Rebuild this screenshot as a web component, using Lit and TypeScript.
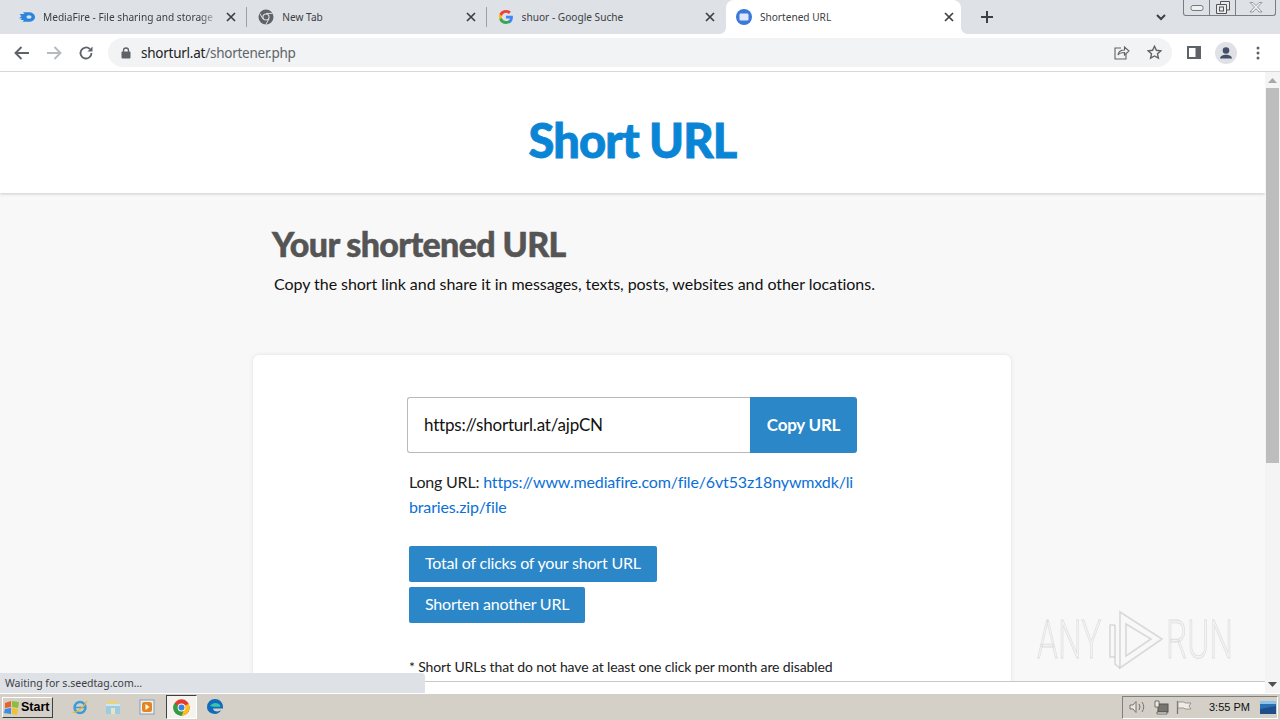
import { LitElement, html, css, svg } from "lit";
import { customElement } from "lit/decorators.js";

const closeIcon = html`<svg class="close" viewBox="0 0 10 10" width="10" height="10"><path d="M1 1l8 8M9 1l-8 8" stroke="#3c4043" stroke-width="1.7" fill="none"/></svg>`;

const mediafire = html`<svg viewBox="0 0 16 16" width="16" height="16"><path d="M0.500 5h5L4 3.200h5.500C13.400 3.200 16 5.300 16 8s-2.600 4.800-6.500 4.800H3.500L5 11H1.500L3 9.300H0L2.500 7.300z" fill="#2a86dc"/><ellipse cx="10" cy="8" rx="2.600" ry="1.700" fill="#dee1e6"/></svg>`;
const chromeGrey = html`<svg viewBox="0 0 16 16" width="16" height="16"><circle cx="8" cy="8" r="7.500" fill="#5f6368"/><circle cx="8" cy="8" r="3.600" fill="#dee1e6"/><circle cx="8" cy="8" r="2.500" fill="#5f6368"/><path d="M8 4.400h6.600M5 10l-3.200-5.500M11 10l-3.300 5.600" stroke="#dee1e6" stroke-width="1"/></svg>`;
const googleG = html`<svg viewBox="0 0 16 16" width="16" height="16"><path d="M14.900 8.200c0-.5 0-1-.1-1.500H8v2.900h3.900c-.2.900-.7 1.700-1.500 2.200v1.800h2.400c1.400-1.300 2.100-3.200 2.100-5.400z" fill="#4285f4"/><path d="M8 15c2 0 3.600-.7 4.800-1.800l-2.400-1.800c-.6.400-1.400.7-2.400.7-1.900 0-3.500-1.300-4.100-3H1.500v1.900C2.700 13.400 5.100 15 8 15z" fill="#34a853"/><path d="M3.900 9.100c-.3-.7-.3-1.500 0-2.200V5H1.500c-.8 1.600-.8 3.400 0 5z" fill="#fbbc05"/><path d="M8 3.800c1.100 0 2 .4 2.800 1.100l2.100-2.100C11.600 1.700 9.900 1 8 1 5.100 1 2.700 2.600 1.500 5l2.400 1.900c.6-1.800 2.200-3.100 4.100-3.100z" fill="#ea4335"/></svg>`;
const shortIcon = html`<svg viewBox="0 0 16 16" width="16" height="16"><circle cx="8" cy="8" r="8" fill="#3b78d8"/><rect x="3.500" y="4.500" width="9" height="7" rx="1.200" fill="#dfe8f8"/></svg>`;

const tabs = [
  { title: "MediaFire - File sharing and storage ", icon: mediafire, fade: true },
  { title: "New Tab", icon: chromeGrey },
  { title: "shuor - Google Suche", icon: googleG },
  { title: "Shortened URL", icon: shortIcon, active: true },
];

const wmStroke = "rgba(170,170,170,.4)";
const wmTriangle = svg`<g fill="none" stroke=${wmStroke} stroke-width="1.600"><path d="M12 2l42 27-42 29z"/><path d="M18 14l25 15-25 17z"/><path d="M12 58l-5-4V15"/><path d="M7 15H2v32h5"/></g>`;

@customElement("tab-strip")
class TabStrip extends LitElement {
  static styles = css`
    :host { display: flex; height: 34px; background: #dee1e6; padding-left: 8px; flex: none; }
    .tab { width: 239.300px; height: 34px; box-sizing: border-box; display: flex; align-items: center; padding: 0 11px; position: relative; flex: none; font: 10.150px/16px "Noto Sans", sans-serif; color: #3c4043; }
    .tab .ic { width: 16px; height: 16px; flex: none; display: block; margin-right: 8px; }
    .tab .t { flex: 1; white-space: nowrap; overflow: hidden; min-width: 0; }
    .tab.fade .t { -webkit-mask-image: linear-gradient(90deg, #000 90%, transparent 100%); mask-image: linear-gradient(90deg, #000 90%, transparent 100%); }
    .tab .close { flex: none; margin-left: 8px; display: block; }
    .tab + .tab::before { content: ""; position: absolute; left: -1px; top: 7px; width: 1px; height: 20px; background: #9aa0a6; }
    .tab.active { width: 235px; background: #fff; border-radius: 8px 8px 0 0; padding: 0 7px 0 10px; margin-right: 5px; }
    .tab.active::before, .tab.active::after { content: ""; position: absolute; top: auto; bottom: 0; width: 6px; height: 6px; }
    .tab.active::before { left: -6px; background: radial-gradient(circle at 0 0, transparent 5.500px, #fff 6px); }
    .tab.active::after { left: 100%; background: radial-gradient(circle at 100% 0, transparent 5.500px, #fff 6px); }
    .plus { width: 42px; display: flex; align-items: center; justify-content: center; }
    .spacer { flex: 1; }
    .chev { display: flex; align-items: center; margin-right: 17px; }
    .win { display: flex; align-self: flex-start; height: 16px; width: 93px; margin-right: 4px; border: 1px solid #7a7d83; border-top: none; border-radius: 0 0 3px 3px; box-sizing: border-box; }
    .win span { display: flex; align-items: center; justify-content: center; }
    .win .a, .win .b { width: 25px; border-right: 1px solid #7a7d83; }
    .win .c { flex: 1; }
  `;
  render() {
    return html`
      ${tabs.map((t) => html`<div class="tab ${t.active ? "active" : ""} ${t.fade ? "fade" : ""}">
        <span class="ic">${t.icon}</span><span class="t">${t.title}</span>${closeIcon}
      </div>`)}
      <div class="plus"><svg width="12" height="12" viewBox="0 0 12 12"><path d="M6 0v12M0 6h12" stroke="#3c4043" stroke-width="2"/></svg></div>
      <div class="spacer"></div>
      <div class="chev"><svg width="10" height="7" viewBox="0 0 10 7"><path d="M1 1l4 4 4-4" stroke="#3c4043" stroke-width="2" fill="none"/></svg></div>
      <div class="win">
        <span class="a"><svg width="14" height="8" viewBox="0 0 14 8"><rect x="1" y="1.500" width="12" height="5" rx="2" fill="#f0f1f3" stroke="#777"/></svg></span>
        <span class="b"><svg width="14" height="13" viewBox="0 0 14 13"><path d="M4.500 3V.5h9v8.500H11M.5 3.500h10v9H.5z" fill="#e9ebee" stroke="#555"/><rect x="3.500" y="6" width="4" height="4" fill="none" stroke="#555"/></svg></span>
        <span class="c"><svg width="14" height="11" viewBox="0 0 14 11"><path d="M1 .5l4.500 4.500L1 10h3l3-3.300L10 10h3L8.500 5 13 .5h-3L7 3.600 4 .5z" fill="#eef0f2" stroke="#888" stroke-width=".8"/></svg></span>
      </div>
    `;
  }
}

@customElement("tool-bar")
class ToolBar extends LitElement {
  static styles = css`
    :host { display: flex; align-items: center; height: 38px; box-sizing: border-box; background: #fff; border-bottom: 1px solid #d6d8da; flex: none; padding: 4px 0 4px 6px; }
    .btn { width: 32px; height: 32px; display: flex; align-items: center; justify-content: center; flex: none; }
    .omni { flex: 1; margin-left: 6px; height: 29px; background: #f1f3f4; border-radius: 15px; display: flex; align-items: center; padding: 0 2px 0 13px; min-width: 0; }
    .lock { flex: none; margin-right: 10px; display: block; }
    .url { flex: 1; font: 13.500px/18px "Noto Sans", sans-serif; letter-spacing: -0.250px; color: #202124; white-space: nowrap; }
    .url span { color: #5f6368; }
    .right { flex: none; display: flex; margin-left: 6px; margin-right: 6px; }
  `;
  render() {
    return html`
      <div class="btn"><svg width="16" height="14" viewBox="0 0 16 14"><path d="M15 7H2M7.500 1L1.500 7l6 6" stroke="#5f6368" stroke-width="1.900" fill="none"/></svg></div>
      <div class="btn"><svg width="16" height="14" viewBox="0 0 16 14"><path d="M1 7h13M8.500 1l6 6-6 6" stroke="#b7babe" stroke-width="1.900" fill="none"/></svg></div>
      <div class="btn"><svg width="16" height="16" viewBox="0 0 16 16"><path d="M13.500 8a5.500 5.500 0 1 1-1.600-3.900" stroke="#5f6368" stroke-width="1.800" fill="none"/><path d="M14.500 1.500v5h-5z" fill="#5f6368"/></svg></div>
      <div class="omni">
        <svg class="lock" width="10" height="12" viewBox="0 0 10 12"><path d="M2.500 5V3.500a2.500 2.500 0 0 1 5 0V5" stroke="#5f6368" stroke-width="1.300" fill="none"/><rect x="0.500" y="4.500" width="9" height="7" rx="1" fill="#5f6368"/></svg>
        <div class="url">shorturl.at<span>/shortener.php</span></div>
        <div class="btn"><svg width="16" height="15" viewBox="0 0 16 15"><path d="M7 3H1v11h11V9" stroke="#5f6368" stroke-width="1.100" fill="none"/><path d="M4 10c.5-3.500 3-5 6.500-5V2l4.500 4-4.500 4V7.500C8 7.500 5.500 8 4 10z" fill="none" stroke="#5f6368" stroke-width="1.100"/></svg></div>
        <div class="btn"><svg width="15" height="15" viewBox="0 0 15 15"><path d="M7.500 1.300l1.900 4 4.400.5-3.300 3 .9 4.400-3.900-2.200-3.900 2.200.9-4.400-3.300-3 4.400-.5z" fill="none" stroke="#5f6368" stroke-width="1.400"/></svg></div>
      </div>
      <div class="right">
        <div class="btn"><svg width="14" height="13" viewBox="0 0 14 13"><path d="M0 0h14v13H0z" fill="#5f6368"/><rect x="2" y="2" width="6.500" height="9" fill="#fff"/></svg></div>
        <div class="btn"><svg width="22" height="22" viewBox="0 0 22 22"><circle cx="11" cy="11" r="11" fill="#dfe1e6"/><circle cx="11" cy="8.500" r="3.300" fill="#44506a"/><path d="M5 16.500c0-2.500 3-3.800 6-3.800s6 1.300 6 3.800z" fill="#44506a"/></svg></div>
        <div class="btn"><svg width="4" height="14" viewBox="0 0 4 14"><circle cx="2" cy="2" r="1.500" fill="#5f6368"/><circle cx="2" cy="7" r="1.500" fill="#5f6368"/><circle cx="2" cy="12" r="1.500" fill="#5f6368"/></svg></div>
      </div>
    `;
  }
}

@customElement("short-page")
class ShortPage extends LitElement {
  static styles = css`
    :host { display: block; flex: 1; min-width: 0; height: 100%; overflow: hidden; background: #f8f8f8; font-family: Lato, sans-serif; border-bottom: 1px solid #c8c8c8; box-sizing: border-box; }
    header { height: 121px; box-sizing: border-box; padding-top: 15px; background: #fff; box-shadow: 0 1px 3px rgba(0,0,0,.18); display: flex; align-items: center; justify-content: center; }
    h1 { margin: 0; font: 900 47px/60px Lato, sans-serif; letter-spacing: -0.900px; color: #0a85d6; -webkit-text-stroke: 0.800px #0a85d6; }
    .wrap { width: 758px; margin: 0 0 0 253px; padding-top: 30px; }
    h2 { margin: 0 0 0 19px; font: 900 34px/42px Lato, sans-serif; letter-spacing: -0.650px; color: #555; -webkit-text-stroke: 0.500px #555; }
    .sub { margin: 7px 0 0 21px; font: 400 16px/24px Lato, sans-serif; letter-spacing: -0.050px; color: #111; }
    .card { margin-top: 59px; height: 400px; box-sizing: border-box; background: #fff; border-radius: 6px; box-shadow: 0 0 4px rgba(0,0,0,.1); padding: 42px 154px 0; }
    .row { display: flex; height: 56px; width: 450px; }
    .input { flex: 1; box-sizing: border-box; border: 1px solid #b9b9b9; border-right: none; border-radius: 3px 0 0 3px; padding: 0 16px 1px; display: flex; align-items: center; font-size: 17px; color: #111; letter-spacing: -0.200px; }
    .copy { width: 107px; background: #2b87c8; color: #fff; border-radius: 0 3px 3px 0; display: flex; align-items: center; justify-content: center; font-size: 17px; font-weight: 700; letter-spacing: -0.250px; padding-bottom: 1px; box-sizing: border-box; }
    .long { margin: 16px 0 0 2px; width: 446px; font-size: 16px; line-height: 25px; letter-spacing: -0.200px; color: #222; word-break: break-all; }
    .long a { color: #0b70d6; text-decoration: none; letter-spacing: -0.150px; }
    .act { margin: 27px 0 0 2px; display: flex; flex-direction: column; align-items: flex-start; gap: 5px; }
    .act div { height: 36px; box-sizing: border-box; display: flex; align-items: center; padding: 0 16px 3px; background: #2b87c8; color: #fff; border-radius: 2px; font-size: 16px; letter-spacing: -0.200px; }
    .note { margin: 35px 0 0 2px; font-size: 14px; line-height: 18px; letter-spacing: -0.130px; color: #222; }
  `;
  render() {
    return html`
      <header><h1>Short URL</h1></header>
      <div class="wrap">
        <h2>Your shortened URL</h2>
        <p class="sub">Copy the short link and share it in messages, texts, posts, websites and other locations.</p>
        <div class="card">
          <div class="row"><div class="input">https://shorturl.at/ajpCN</div><div class="copy">Copy URL</div></div>
          <div class="long">Long URL: <a>https://www.mediafire.com/file/6vt53z18nywmxdk/libraries.zip/file</a></div>
          <div class="act"><div>Total of clicks of your short URL</div><div>Shorten another URL</div></div>
          <div class="note">* Short URLs that do not have at least one click per month are disabled</div>
        </div>
      </div>
    `;
  }
}

@customElement("task-bar")
class TaskBar extends LitElement {
  static styles = css`
    :host { display: flex; align-items: center; height: 27px; flex: none; background: #d4d0c8; box-sizing: border-box; border-top: 1px solid #fff; padding-left: 2px; }
    .start { width: 51px; height: 21px; box-sizing: border-box; display: flex; align-items: center; gap: 1px; padding-left: 1px; border: 1px solid; border-color: #fff #404040 #404040 #fff; font: 700 12.500px "Liberation Sans", sans-serif; color: #000; }
    .apps { display: flex; align-items: center; margin-left: 10px; }
    .app { width: 33.500px; height: 24px; display: flex; align-items: center; justify-content: center; box-sizing: border-box; flex: none; }
    .app.on { width: 31px; height: 24px; background: #f4f3f0; border: 1px solid; border-color: #404040 #fff #fff #404040; margin: 0 2px; }
    .sp { flex: 1; }
    .tray { width: 156px; height: 23px; margin-right: 2px; box-sizing: border-box; border: 1px solid; border-color: #808080 #fff #fff #808080; display: flex; align-items: center; font: 11px "Liberation Sans", sans-serif; color: #111; padding-left: 6px; }
    .tray svg { flex: none; display: block; }
    .gap1 { margin-left: 7px; }
    .time { margin-left: 17px; flex: 1; white-space: nowrap; }
    .desk { margin-right: 1px; }
  `;
  render() {
    return html`
      <div class="start">
        <svg width="16" height="15" viewBox="0 0 16 15"><path d="M1 3l6-2v6l-6 1z" fill="#e8622a"/><path d="M8 1l7 1-1 6-6-1z" fill="#8cbd3f"/><path d="M1 9l6-1v6l-7-1z" fill="#3c8ede"/><path d="M8 8l6 1-1 6-5-1z" fill="#f2c12e"/></svg>Start
      </div>
      <div class="apps">
        <div class="app"><svg width="18" height="18" viewBox="0 0 18 18"><circle cx="9" cy="9.500" r="5.500" fill="none" stroke="#3d9ad9" stroke-width="2.400"/><path d="M4 9.500h10" stroke="#3d9ad9" stroke-width="1.600"/><path d="M2 14c3 2 11-5 14-11" stroke="#e8b92b" stroke-width="1.200" fill="none"/></svg></div>
        <div class="app"><svg width="16" height="16" viewBox="0 0 16 16"><path d="M1 5h14v10H1z" fill="#9ccbe2"/><path d="M2 2h10l1 3H2z" fill="#ecd27a"/><rect x="6" y="9" width="4" height="6" fill="#e8e3c2"/><path d="M1 5h14v2H1z" fill="#cfe6ef"/></svg></div>
        <div class="app"><svg width="16" height="16" viewBox="0 0 16 16"><rect x="1" y="1" width="14" height="14" fill="#f3f1ec" stroke="#7f9cc0"/><rect x="3" y="3" width="10" height="10" rx="2" fill="#e8841f"/><path d="M6.500 5l4 3-4 3z" fill="#fff"/></svg></div>
        <div class="app on"><svg width="17" height="17" viewBox="0 0 48 48"><circle cx="24" cy="24" r="23" fill="#e33b2e"/><path d="M24 24L44 13.500A23 23 0 0 1 24 47z" fill="#fbc116"/><path d="M24 24l-20.500-11A23 23 0 0 0 24 47l10-22z" fill="#2f9e44"/><circle cx="24" cy="24" r="11" fill="#fff"/><circle cx="24" cy="24" r="8.500" fill="#3f7fe0"/></svg></div>
        <div class="app"><svg width="18" height="18" viewBox="0 0 18 18"><path d="M1 9a8 8 0 0 1 16 0v1.500H7c.3 2.800 4.500 4 8 1.800-1.500 3.200-5.500 4.500-8.500 3.200C3 14.800 1 12 1 9z" fill="#0f6cbd"/><path d="M4 8.500C5 5.500 9 4 12 5.500c1.800.9 2.500 2.300 2.500 3.300H7.500C6 8 5 8 4 8.500z" fill="#3bc4a5"/></svg></div>
      </div>
      <div class="sp"></div>
      <div class="tray">
        <svg width="18" height="14" viewBox="0 0 18 14"><path d="M1 5h3l3-3.500v11L4 9H1z" fill="#e8e6e0" stroke="#777"/><path d="M10 4q2 3 0 6M13 2q3.500 5 0 10" stroke="#777" fill="none"/></svg>
        <svg class="gap1" width="15" height="15" viewBox="0 0 15 15"><rect x="4" y="4" width="10" height="8" fill="#77756f" stroke="#555"/><path d="M1 1h4v6H1zM3 12h10v2H3z" fill="#ece9e2" stroke="#555" stroke-width=".8"/></svg>
        <svg class="gap1" width="16" height="15" viewBox="0 0 16 15"><path d="M1.500 1v13" stroke="#777" stroke-width="1.300"/><path d="M2 2h6l1 1h6l-2 3 2 3H9L8 8H2z" fill="#eeece6" stroke="#888" stroke-width=".8"/></svg>
        <span class="time">3:55 PM</span>
        <svg class="desk" width="16" height="13" viewBox="0 0 16 13"><rect width="16" height="13" fill="#2b6fb4"/><path d="M0 8l16-3v8H0z" fill="#1e4f8a"/><path d="M0 0h16v3H0z" fill="#8cc3ea"/></svg>
      </div>
    `;
  }
}

@customElement("app-root")
class AppRoot extends LitElement {
  static styles = css`
    :host { display: flex; flex-direction: column; width: 1280px; height: 720px; overflow: hidden; position: relative; background: #fff; }
    .view { height: 610px; display: flex; flex: none; position: relative; overflow: hidden; }
    .vbar { width: 15px; flex: none; background: #f4f4f4; display: flex; flex-direction: column; align-items: center; }
    .arrow { height: 16px; flex: none; display: flex; align-items: center; justify-content: center; }
    .thumb { width: 13px; height: 375px; background: #bdbdbd; flex: none; }
    .hbar { height: 11px; background: #fff; flex: none; display: flex; justify-content: flex-end; }
    .corner { width: 15px; background: #f4f4f4; display: flex; justify-content: center; align-items: flex-start; padding-top: 0; }
    .status { position: absolute; left: 0; bottom: 27px; width: 425px; height: 20px; box-sizing: border-box; background: #dee1e6; border-top-right-radius: 4px; padding-left: 5px; font: 10.500px/20px "Noto Sans", sans-serif; color: #3c4043; }
    .wm { position: absolute; left: 1037px; top: 538px; width: 196px; height: 60px; display: flex; align-items: center; pointer-events: none; font: 300 54px/60px Roboto, sans-serif; color: rgba(235,235,235,.5); -webkit-text-stroke: 0.800px rgba(185,185,185,.4); }
    .wm span { width: 65px; flex: none; display: block; transform: scaleX(.62); transform-origin: 0 50%; white-space: nowrap; }
    .wm svg { flex: none; display: block; margin-left: 2px; margin-right: 2px; }
    .wm span + svg { margin-left: 6px; }
  `;
  render() {
    return html`
      <tab-strip></tab-strip>
      <tool-bar></tool-bar>
      <div class="view">
        <short-page></short-page>
        <div class="vbar">
          <div class="arrow"><svg width="9" height="5" viewBox="0 0 9 5"><path d="M4.500 0L9 5H0z" fill="#a8a8a8"/></svg></div>
          <div class="thumb"></div>
        </div>
        <div class="wm"><span>ANY</span><svg width="56" height="60" viewBox="0 0 56 60">${wmTriangle}</svg><span>RUN</span></div>
      </div>
      <div class="hbar"><div class="corner"><svg width="9" height="5" viewBox="0 0 9 5"><path d="M0 0h9L4.500 5z" fill="#505050"/></svg></div></div>
      <task-bar></task-bar>
      <div class="status">Waiting for s.seedtag.com...</div>
    `;
  }
}
